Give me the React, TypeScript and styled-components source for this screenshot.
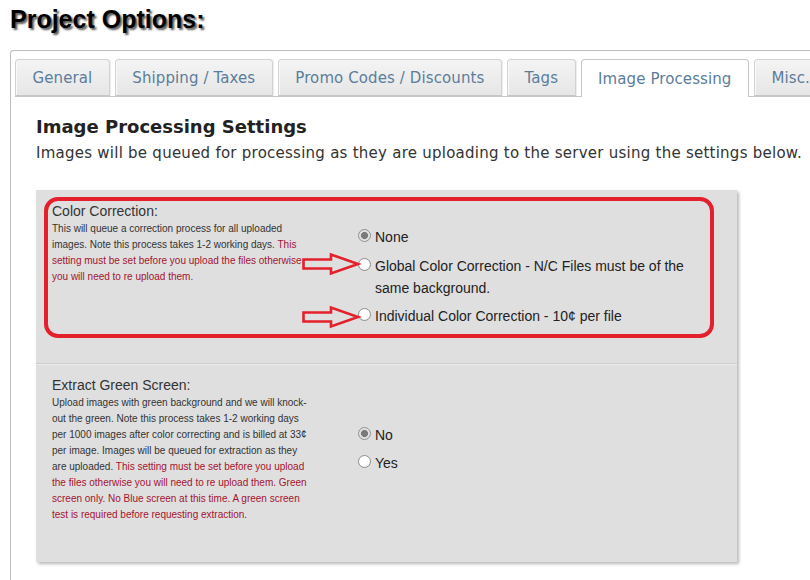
import React from 'react';
import styled, { createGlobalStyle } from 'styled-components';

const GlobalStyle = createGlobalStyle`
  html, body {
    margin: 0;
    padding: 0;
    background: #ffffff;
  }
  body {
    font-family: "DejaVu Sans", Verdana, sans-serif;
    overflow: hidden;
  }
`;

const Page = styled.div`
  width: 810px;
  height: 580px;
  padding-left: 10px;
  box-sizing: border-box;
  overflow: hidden;
`;

const PageTitle = styled.h1`
  margin: 5px 0 0 0;
  font-family: "Liberation Sans", Arial, sans-serif;
  font-size: 25px;
  font-weight: bold;
  line-height: 29px;
  color: #000;
  text-shadow: 2px 2px 2px rgba(0, 0, 0, 0.65);
`;

const TabsWrap = styled.div`
  margin-top: 16px;
  border: 1px solid #bdbdbd;
  border-right: none;
  border-bottom: none;
  border-top-left-radius: 4px;
  height: 600px;
  padding: 8px 0 0 4px;
`;

const TabNav = styled.ul`
  list-style: none;
  display: flex;
  gap: 5px;
  margin: 0;
  padding: 0;
  height: 37px;
  border-bottom: 1px solid #c6c6c6;
  white-space: nowrap;
`;

const Tab = styled.li<{ $active?: boolean }>`
  height: ${p => (p.$active ? '38px' : '37px')};
  box-sizing: border-box;
  padding: 0 16.5px;
  display: flex;
  align-items: center;
  font-size: 15px;
  letter-spacing: 0.1px;
  color: #5b7d9b;
  border: 1px solid ${p => (p.$active ? '#c6c6c6' : '#d2d2d2')};
  border-bottom: ${p => (p.$active ? 'none' : '1px solid #c6c6c6')};
  border-radius: 4px 4px 0 0;
  background: ${p => (p.$active ? '#ffffff' : 'linear-gradient(#f4f4f4, #e6e6e6)')};
  box-shadow: ${p => (p.$active ? 'none' : 'inset 1px 0 0 #fafafa, 1px 0 1px rgba(0,0,0,0.08)')};
  position: relative;
  z-index: ${p => (p.$active ? 1 : 0)};
`;

const Content = styled.div`
  padding: 19px 0 0 21px;
`;

const SettingsHeading = styled.h2`
  margin: 0 0 4px 0;
  font-size: 18px;
  font-weight: bold;
  line-height: 22px;
  color: #222;
`;

const Intro = styled.p`
  margin: 0 0 26px 0;
  font-size: 15px;
  letter-spacing: 0.25px;
  line-height: 22px;
  color: #333;
  white-space: nowrap;
`;

const OptionsBox = styled.div`
  width: 701px;
  background: #dfdfdf;
  box-shadow: 2px 2px 3px rgba(0, 0, 0, 0.28);
  font-family: "Liberation Sans", Arial, sans-serif;
`;

const Section = styled.div<{ $minH: number; $padBottom: number; $divider?: boolean }>`
  position: relative;
  box-sizing: border-box;
  display: grid;
  grid-template-columns: 258px 1fr;
  column-gap: 48px;
  min-height: ${p => p.$minH}px;
  padding: 11px 16px ${p => p.$padBottom}px 16px;
  border-top: ${p => (p.$divider ? '1px solid #cdcdcd' : 'none')};
  box-shadow: ${p => (p.$divider ? 'inset 0 1px 0 #ebebeb' : 'none')};
`;

const InfoCol = styled.div`
  align-self: start;
`;

const SectionTitle = styled.div`
  font-size: 14px;
  line-height: 20px;
  color: #333;
`;

const Note = styled.div`
  font-size: 10px;
  line-height: 16px;
  color: #333;
`;

const Warn = styled.span`
  color: #a3142f;
`;

const ChoiceCol = styled.div`
  align-self: center;
  display: flex;
  flex-direction: column;
  gap: 6.5px;
`;

const Choice = styled.label`
  display: flex;
  align-items: flex-start;
  gap: 4px;
  font-size: 14px;
  line-height: 22px;
  color: #222;
`;

const Radio = styled.input.attrs({ type: 'radio' })`
  appearance: none;
  -webkit-appearance: none;
  flex: 0 0 auto;
  width: 13px;
  height: 13px;
  margin: 3px 0 0 0;
  border-radius: 50%;
  border: 1px solid #8f8f8f;
  background: radial-gradient(circle at 50% 35%, #ffffff 55%, #e6e6e6 100%);
  box-sizing: border-box;
  position: relative;

  &:checked {
    background: radial-gradient(circle, #7a7a7a 0 3.2px, #dcdcdc 3.8px, #f2f2f2 100%);
  }
`;

const Callout = styled.div`
  position: absolute;
  left: 8px;
  top: 7px;
  width: 670px;
  height: 141px;
  box-sizing: border-box;
  border: 4px solid #e3202b;
  border-radius: 14px;
  pointer-events: none;
`;

const ArrowMark = styled.svg<{ $top: number }>`
  position: absolute;
  left: 266px;
  top: ${p => p.$top}px;
  width: 58px;
  height: 22px;
  overflow: visible;
  pointer-events: none;
`;

const Arrow = ({ top }: { top: number }) => (
  <ArrowMark $top={top} viewBox="0 0 58 22">
    <polygon
      points="1.5,6.5 29,6.5 29,1.5 56,11 29,20.5 29,15.5 1.5,15.5"
      fill="none"
      stroke="#e3202b"
      strokeWidth="2.6"
      strokeLinejoin="miter"
    />
  </ArrowMark>
);

const tabs = ['General', 'Shipping / Taxes', 'Promo Codes / Discounts', 'Tags', 'Image Processing', 'Misc.'];

const App: React.FC = () => {
  return (
    <Page>
      <GlobalStyle />
      <PageTitle>Project Options:</PageTitle>
      <TabsWrap>
        <TabNav>
          {tabs.map(t => (
            <Tab key={t} $active={t === 'Image Processing'}>
              {t}
            </Tab>
          ))}
        </TabNav>

        <Content>
          <SettingsHeading>Image Processing Settings</SettingsHeading>
          <Intro>
            Images will be queued for processing as they are uploading to the server using the settings below.
          </Intro>

          <OptionsBox>
            {/* Color correction */}
            <Section $minH={173} $padBottom={11}>
              <InfoCol>
                <SectionTitle>Color Correction:</SectionTitle>
                <Note>
                  This will queue a correction process for all uploaded images. Note this process takes 1-2
                  working days. <Warn>This setting must be set before you upload the files otherwise you will
                  need to re upload them.</Warn>
                </Note>
              </InfoCol>
              <ChoiceCol>
                <Choice>
                  <Radio name="cc" defaultChecked />
                  <span>None</span>
                </Choice>
                <Choice>
                  <Radio name="cc" />
                  <span>
                    Global Color Correction - N/C Files must be of the
                    <br />
                    same background.
                  </span>
                </Choice>
                <Choice>
                  <Radio name="cc" />
                  <span>Individual Color Correction - 10¢ per file</span>
                </Choice>
              </ChoiceCol>

              <Callout />
              <Arrow top={63} />
              <Arrow top={116} />
            </Section>

            {/* Green screen */}
            <Section $minH={0} $padBottom={39} $divider>
              <InfoCol>
                <SectionTitle>Extract Green Screen:</SectionTitle>
                <Note>
                  Upload images with green background and we will knock-out the green. Note this process takes
                  1-2 working days per 1000 images after color correcting and is billed at 33¢ per image. Images
                  will be queued for extraction as they are uploaded.{' '}
                  <Warn>This setting must be set before you upload the files otherwise you will need to re
                  upload them. Green screen only. No Blue screen at this time. A green screen test is required
                  before requesting extraction.</Warn>
                </Note>
              </InfoCol>
              <ChoiceCol>
                <Choice>
                  <Radio name="gs" defaultChecked />
                  <span>No</span>
                </Choice>
                <Choice>
                  <Radio name="gs" />
                  <span>Yes</span>
                </Choice>
              </ChoiceCol>
            </Section>
          </OptionsBox>
        </Content>
      </TabsWrap>
    </Page>
  );
};

export default App;
